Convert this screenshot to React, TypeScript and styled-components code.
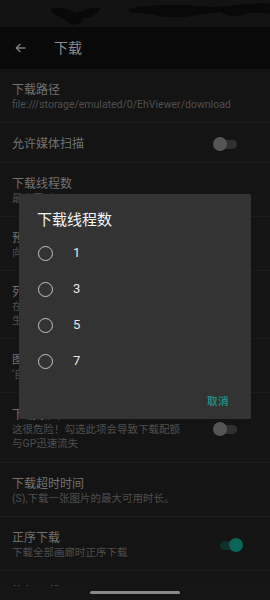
import React from "react";
import styled, { createGlobalStyle } from "styled-components";

const Global = createGlobalStyle`
  html, body { margin: 0; padding: 0; background: #141414; }
  body { font-family: Roboto, "Noto Sans CJK SC", sans-serif; }
  * { box-sizing: border-box; }
`;

const Screen = styled.div`
  position: relative;
  width: 270px;
  height: 600px;
  overflow: hidden;
  background: #141414;
  display: flex;
  flex-direction: column;
`;

const StatusBar = styled.div`
  height: 27px;
  background: #131313;
  flex-shrink: 0;
  display: flex;
`;

const Toolbar = styled.div`
  height: 42px;
  background: #090909;
  display: flex;
  align-items: center;
  padding-left: 14px;
  gap: 26px;
  flex-shrink: 0;
`;

const ToolbarTitle = styled.div`
  color: #8c8c8c;
  font-size: 14px;
  line-height: 16px;
`;

const List = styled.div`
  display: flex;
  flex-direction: column;
`;

const Item = styled.div<{ $tall?: number }>`
  display: flex;
  align-items: center;
  padding: ${(p) => (p.$tall ? "14px 27px 11px 12px" : "13px 27px 10px 12px")};
  border-bottom: 1px solid #1c1c1c;
`;

const ItemText = styled.div`
  flex: 1;
  display: flex;
  flex-direction: column;
  min-width: 0;
`;

const Title = styled.div`
  color: #727272;
  font-size: 12px;
  line-height: 16px;
  white-space: nowrap;
`;

const Sub = styled.div`
  color: #4f4f4f;
  font-size: 10.5px;
  line-height: 14px;
  white-space: nowrap;
`;

const SwitchBox = styled.div`
  position: relative;
  width: 30px;
  height: 16px;
  flex-shrink: 0;
`;

const Track = styled.div<{ $on?: boolean }>`
  position: absolute;
  left: ${(p) => (p.$on ? "7px" : "1px")};
  top: 4px;
  width: 23px;
  height: 9px;
  border-radius: 5px;
  background: ${(p) => (p.$on ? "#0f302b" : "#303030")};
`;

const Thumb = styled.div<{ $on?: boolean }>`
  position: absolute;
  top: 1px;
  left: ${(p) => (p.$on ? "16px" : "0px")};
  width: 14px;
  height: 14px;
  border-radius: 50%;
  background: ${(p) => (p.$on ? "#0b6457" : "#555555")};
`;

const Switch = ({ on }: { on?: boolean }) => (
  <SwitchBox>
    <Track $on={on} />
    <Thumb $on={on} />
  </SwitchBox>
);

const NavBar = styled.div`
  position: absolute;
  left: 0;
  right: 0;
  top: 586px;
  bottom: 0;
  background: #151515;
  display: flex;
  justify-content: center;
  padding-top: 5px;
`;

const NavHandle = styled.div`
  width: 90px;
  height: 3px;
  border-radius: 2px;
  background: #8a8a8a;
`;

const Dialog = styled.div`
  position: absolute;
  left: 19px;
  top: 194px;
  width: 232px;
  height: 225px;
  background: #333333;
  border-radius: 2px;
  display: flex;
  flex-direction: column;
`;

const DialogTitle = styled.div`
  color: #f4f4f4;
  font-size: 15px;
  font-weight: 400;
  line-height: 20px;
  padding: 16px 18px 0 18px;
  margin-bottom: 5px;
`;

const Option = styled.div`
  height: 36px;
  display: flex;
  align-items: center;
  padding-left: 19px;
  gap: 20px;
`;

const Radio = styled.div`
  width: 15px;
  height: 15px;
  border-radius: 50%;
  border: 1.6px solid #c4c4c4;
`;

const OptionLabel = styled.div`
  color: #e6e6e6;
  font-size: 13px;
  line-height: 16px;
`;

const Actions = styled.div`
  margin-top: 3px;
  height: 36px;
  display: flex;
  justify-content: flex-end;
  align-items: center;
  padding-right: 22px;
`;

const TextButton = styled.div`
  color: #1f8a7e;
  font-size: 10.5px;
  font-weight: 700;
  letter-spacing: 0.5px;
`;

const Back = () => (
  <svg width="14" height="14" viewBox="0 0 24 24" fill="none" stroke="#8c8c8c" strokeWidth="2.2">
    <path d="M20 12H5" />
    <path d="M11 5l-7 7 7 7" />
  </svg>
);

const StatusBlobs = () => (
  <svg width="270" height="27" viewBox="0 0 270 27">
    <path d="M52 8 C60 6 70 10 76 13 C84 11 92 6 100 8 C98 14 90 18 84 18 C82 24 74 26 70 24 C66 20 62 18 58 16 C54 14 50 11 52 8 Z" fill="#080808" />
    <path d="M128 9 C150 3 190 5 215 7 C240 5 260 2 270 4 L270 14 C262 12 252 12 244 14 C236 18 226 16 220 12 C200 14 180 20 160 16 C145 12 135 14 130 12 Z" fill="#090909" />
  </svg>
);

const items = [
  { t: "下载路径", s: ["file:///storage/emulated/0/EhViewer/download"] },
  { t: "允许媒体扫描", s: [], sw: "off" },
  { t: "下载线程数", s: ["最多同时"] },
  { t: "预载图片", s: ["向后预载"] },
  { t: "列表显示", s: ["在下载列", "生成缩略"] },
  { t: "图片分辨", s: ["‘自动’"] },
  { t: "下载原图", s: ["这很危险！勾选此项会导致下载配额", "与GP迅速流失"], sw: "off", tall: 1 },
  { t: "下载超时时间", s: ["(S),下载一张图片的最大可用时长。"] },
  { t: "正序下载", s: ["下载全部画廊时正序下载"], sw: "on" },
  { t: "恢复下载", s: ["恢复已下载的项目"] },
];

export default function App() {
  return (
    <>
      <Global />
      <Screen>
        <StatusBar>
          <StatusBlobs />
        </StatusBar>
        <Toolbar>
          <Back />
          <ToolbarTitle>下载</ToolbarTitle>
        </Toolbar>
        <List>
          {items.map((it, i) => (
            <Item key={i} $tall={it.tall}>
              <ItemText>
                <Title>{it.t}</Title>
                {it.s.map((line, j) => (
                  <Sub key={j}>{line}</Sub>
                ))}
              </ItemText>
              {it.sw && <Switch on={it.sw === "on"} />}
            </Item>
          ))}
        </List>
        <Dialog>
          <DialogTitle>下载线程数</DialogTitle>
          {["1", "3", "5", "7"].map((n) => (
            <Option key={n}>
              <Radio />
              <OptionLabel>{n}</OptionLabel>
            </Option>
          ))}
          <Actions>
            <TextButton>取消</TextButton>
          </Actions>
        </Dialog>
        <NavBar>
          <NavHandle />
        </NavBar>
      </Screen>
    </>
  );
}
